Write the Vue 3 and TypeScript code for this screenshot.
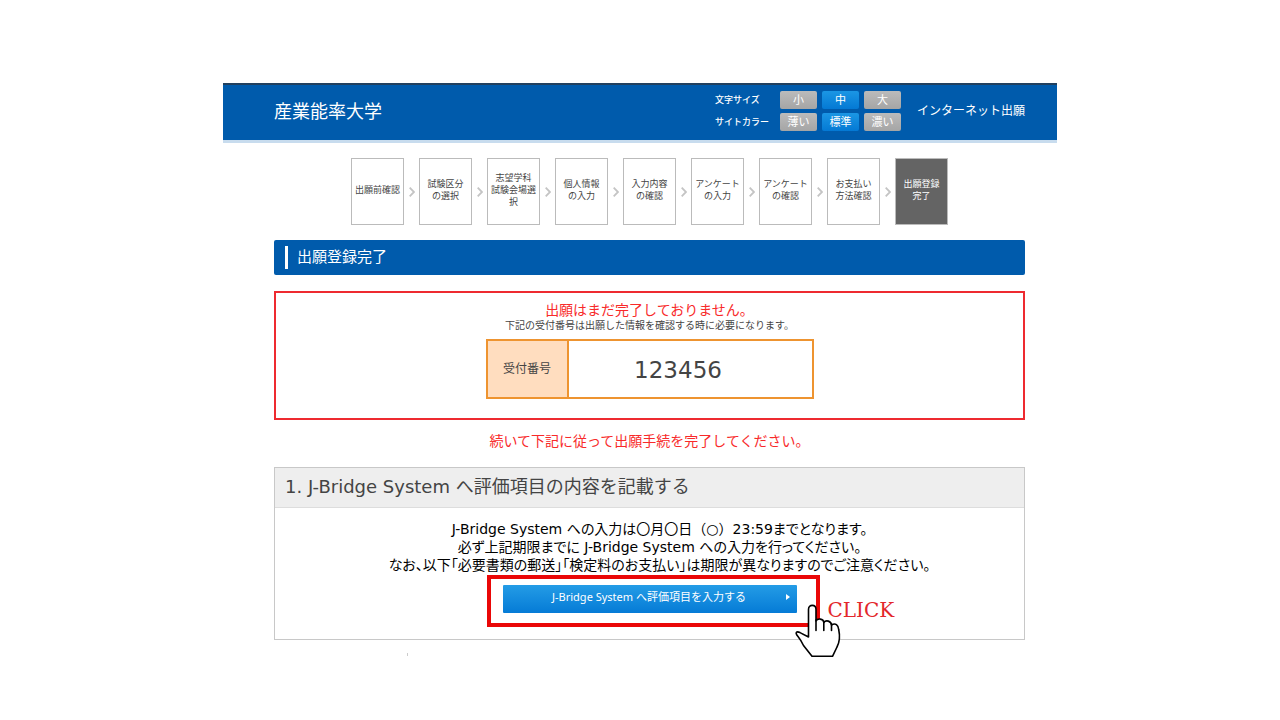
<script setup lang="ts">
import { ref } from 'vue'

interface SettingGroup {
  label: string
  options: string[]
}

const groups: SettingGroup[] = [
  { label: '文字サイズ', options: ['小', '中', '大'] },
  { label: 'サイトカラー', options: ['薄い', '標準', '濃い'] },
]
const selected = ref<number[]>([1, 1])

const steps: string[][] = [
  ['出願前確認'],
  ['試験区分', 'の選択'],
  ['志望学科', '試験会場選', '択'],
  ['個人情報', 'の入力'],
  ['入力内容', 'の確認'],
  ['アンケート', 'の入力'],
  ['アンケート', 'の確認'],
  ['お支払い', '方法確認'],
  ['出願登録', '完了'],
]
const currentStep = 8
</script>

<template>
  <div class="page">
    <header class="header">
      <div class="brand">産業能率大学</div>
      <div class="settings">
        <div v-for="(g, gi) in groups" :key="g.label" class="setting" role="group" :aria-label="g.label">
          <span class="setting-label">{{ g.label }}</span>
          <button
            v-for="(o, oi) in g.options"
            :key="o"
            type="button"
            class="option"
            :class="{ active: selected[gi] === oi }"
            :aria-pressed="selected[gi] === oi"
            @click="selected[gi] = oi"
          >{{ o }}</button>
        </div>
      </div>
      <div class="service">インターネット出願</div>
    </header>

    <main class="main">
      <ol class="steps">
        <li v-for="(lines, i) in steps" :key="i" class="step-item">
          <svg v-if="i > 0" class="chevron" viewBox="0 0 6 10" aria-hidden="true">
            <path d="M0.7 0.7 L5 5 L0.7 9.3" fill="none" stroke="#c4c4c4" stroke-width="1.8" />
          </svg>
          <div class="step" :class="{ current: i === currentStep }">
            <span v-for="line in lines" :key="line">{{ line }}</span>
          </div>
        </li>
      </ol>

      <h1 class="title">出願登録完了</h1>

      <section class="notice">
        <p class="notice-lead">出願はまだ完了しておりません。</p>
        <p class="notice-sub">下記の受付番号は出願した情報を確認する時に必要になります。</p>
        <table class="receipt">
          <tbody>
            <tr>
              <th scope="row">受付番号</th>
              <td>123456</td>
            </tr>
          </tbody>
        </table>
      </section>

      <p class="follow">続いて下記に従って出願手続を完了してください。</p>

      <section class="card">
        <h2 class="card-title">1. J-Bridge System へ評価項目の内容を記載する</h2>
        <div class="card-body">
          <p class="guide">
            J-Bridge System への入力は〇月〇日<span class="full-width">（○）</span>23:59までとなります。<br />
            必ず上記期限までに J-Bridge System への入力を行ってください。<br />
            なお、以下「必要書類の郵送」「検定料のお支払い」は期限が異なりますのでご注意ください。
          </p>
          <div class="action">
            <button type="button" class="go">
              <span>J-Bridge System へ評価項目を入力する</span>
              <svg class="go-arrow" viewBox="0 0 4 6" aria-hidden="true"><path d="M0 0 L4 3 L0 6 Z" fill="#fff" /></svg>
            </button>
            <div class="highlight"></div>
            <svg class="hand" viewBox="0 0 48 54" aria-hidden="true">
              <path
                d="M18 52.3 L9.500 41.500 C7.500 37.500 6.500 35.500 4 32.500 C0.500 28.500 2.500 27 6 28.600 L14.500 33 V5.500 C14.500 0 22 0 22 5.500 V17 C23.500 14 29.500 14.500 29.800 18.500 C32 15.500 37.200 17 37.500 21 C41.500 18.500 44.300 21 44.700 25.500 C46.300 33 45.700 38 43 43 L38.500 52.3 Z"
                fill="#fff" stroke="#000" stroke-width="1.6" stroke-linejoin="round"
              />
              <path d="M22 16 V26.500 M29.800 18 V26.500 M37.500 20 V26.500" fill="none" stroke="#000" stroke-width="1.6" stroke-linecap="round" />
            </svg>
            <span class="click">CLICK</span>
          </div>
        </div>
      </section>
      <div class="speck"></div>
    </main>
  </div>
</template>

<style>
body {
  margin: 0;
  background: #fff;
}
</style>

<style scoped>
.page {
  box-sizing: border-box;
  max-width: 834px;
  min-height: 100vh;
  margin: 0 auto;
  padding-top: 83px;
  font-family: "DejaVu Sans", "Noto Sans CJK JP", sans-serif;
  color: #444;
}
.page button {
  font-family: "Noto Sans", "Noto Sans CJK JP", sans-serif;
  border: 0;
  padding: 0;
  cursor: pointer;
}
.header {
  display: flex;
  align-items: center;
  box-sizing: border-box;
  height: 60px;
  padding: 0 32px 4px 51px;
  background: #005bac;
  border-top: 2px solid #21405f;
  border-bottom: 3px solid #c8dcee;
  color: #fff;
}
.brand {
  flex: 1;
  padding-top: 2px;
  font-size: 18px;
  line-height: 24px;
}
.settings {
  display: flex;
  flex-direction: column;
  gap: 4px;
  margin-right: 16px;
}
.setting {
  display: flex;
  align-items: center;
  gap: 5px;
}
.setting-label {
  width: 60px;
  font-size: 9px;
  line-height: 18px;
  font-weight: 500;
}
.option {
  width: 37px;
  height: 18px;
  border-radius: 2px;
  background: linear-gradient(#bbb, #a5a5a5);
  color: #fff;
  font-size: 11px;
  line-height: 18px;
}
.option.active {
  background: linear-gradient(#1b96e4, #0479d4);
}
.service {
  font-size: 12px;
  line-height: 18px;
}
.main {
  padding: 15px 32px 0 51px;
}
.steps {
  display: flex;
  justify-content: center;
  margin: 0;
  padding: 0;
  list-style: none;
}
.step-item {
  display: flex;
  align-items: center;
}
.chevron {
  width: 6px;
  height: 10px;
  margin: 0 4px 0 5px;
}
.step {
  box-sizing: border-box;
  display: flex;
  flex-direction: column;
  align-items: center;
  justify-content: center;
  width: 53px;
  height: 67px;
  padding-bottom: 3px;
  border: 1px solid #bbb;
  font-size: 9px;
  line-height: 12px;
  white-space: nowrap;
}
.step.current {
  background: #646464;
  color: #fff;
}
.title {
  display: flex;
  align-items: center;
  margin: 15px 0 16px;
  padding: 6px 11px;
  border-radius: 2px;
  background: #005bac;
  color: #fff;
  font-size: 15px;
  font-weight: 400;
  line-height: 23px;
}
.title::before {
  content: "";
  width: 3px;
  height: 23px;
  margin-right: 9px;
  background: #fff;
}
.notice {
  box-sizing: border-box;
  height: 129px;
  border: 2px solid #ee2a30;
  padding-top: 8px;
  text-align: center;
}
.notice-lead {
  margin: 0;
  color: #f82a2a;
  font-size: 14px;
  line-height: 19px;
}
.notice-sub {
  margin: 0 0 7px;
  font-size: 10px;
  line-height: 12px;
}
.receipt {
  width: 328px;
  height: 60px;
  margin: 0 auto;
  border-collapse: collapse;
  table-layout: fixed;
}
.receipt th,
.receipt td {
  border: 2px solid #ee9430;
  padding: 0;
}
.receipt th {
  width: 79px;
  padding-bottom: 4px;
  background: #ffddbf;
  font-size: 12px;
  font-weight: 400;
}
.receipt td {
  padding: 2px 24px 0 0;
  font-size: 23px;
}
.follow {
  margin: 11px 0 15px;
  color: #f82a2a;
  font-size: 14px;
  line-height: 21px;
  text-align: center;
}
.card {
  border: 1px solid #c8c8c8;
}
.card-title {
  margin: 0;
  padding: 6px 10px 8px;
  border-bottom: 1px solid #ddd;
  background: #eee;
  font-size: 18px;
  font-weight: 400;
  line-height: 25px;
}
.card-body {
  padding: 12px 0 26px;
}
.guide {
  margin: 0;
  padding-left: 20px;
  color: #000;
  font-size: 14px;
  line-height: 18px;
  font-feature-settings: "palt";
  text-align: center;
  white-space: nowrap;
}
.full-width {
  font-feature-settings: normal;
}
.action {
  position: relative;
  width: 294px;
  margin: 11px auto 0;
}
.page .go {
  display: flex;
  align-items: center;
  justify-content: center;
  width: 100%;
  height: 28px;
  padding: 0 7px 4px 10px;
  border-radius: 1px;
  background: linear-gradient(#249ce6, #057bd6);
  color: #fff;
  font-size: 11px;
  line-height: 20px;
}
.go span {
  flex: 1;
}
.go-arrow {
  width: 4px;
  height: 6px;
}
.highlight {
  position: absolute;
  box-sizing: border-box;
  left: -16px;
  top: -10px;
  width: 333px;
  height: 52px;
  border: 4px solid #ea0707;
  pointer-events: none;
}
.hand {
  position: absolute;
  left: 291px;
  top: 19px;
  width: 48px;
  height: 54px;
}
.click {
  position: absolute;
  left: 325px;
  top: 13px;
  color: #e3272b;
  font-family: "DejaVu Serif", serif;
  font-size: 20px;
  line-height: 24px;
}
.speck {
  width: 1px;
  height: 3px;
  margin: 13px 0 0 133px;
  background: #ccc;
}
</style>
